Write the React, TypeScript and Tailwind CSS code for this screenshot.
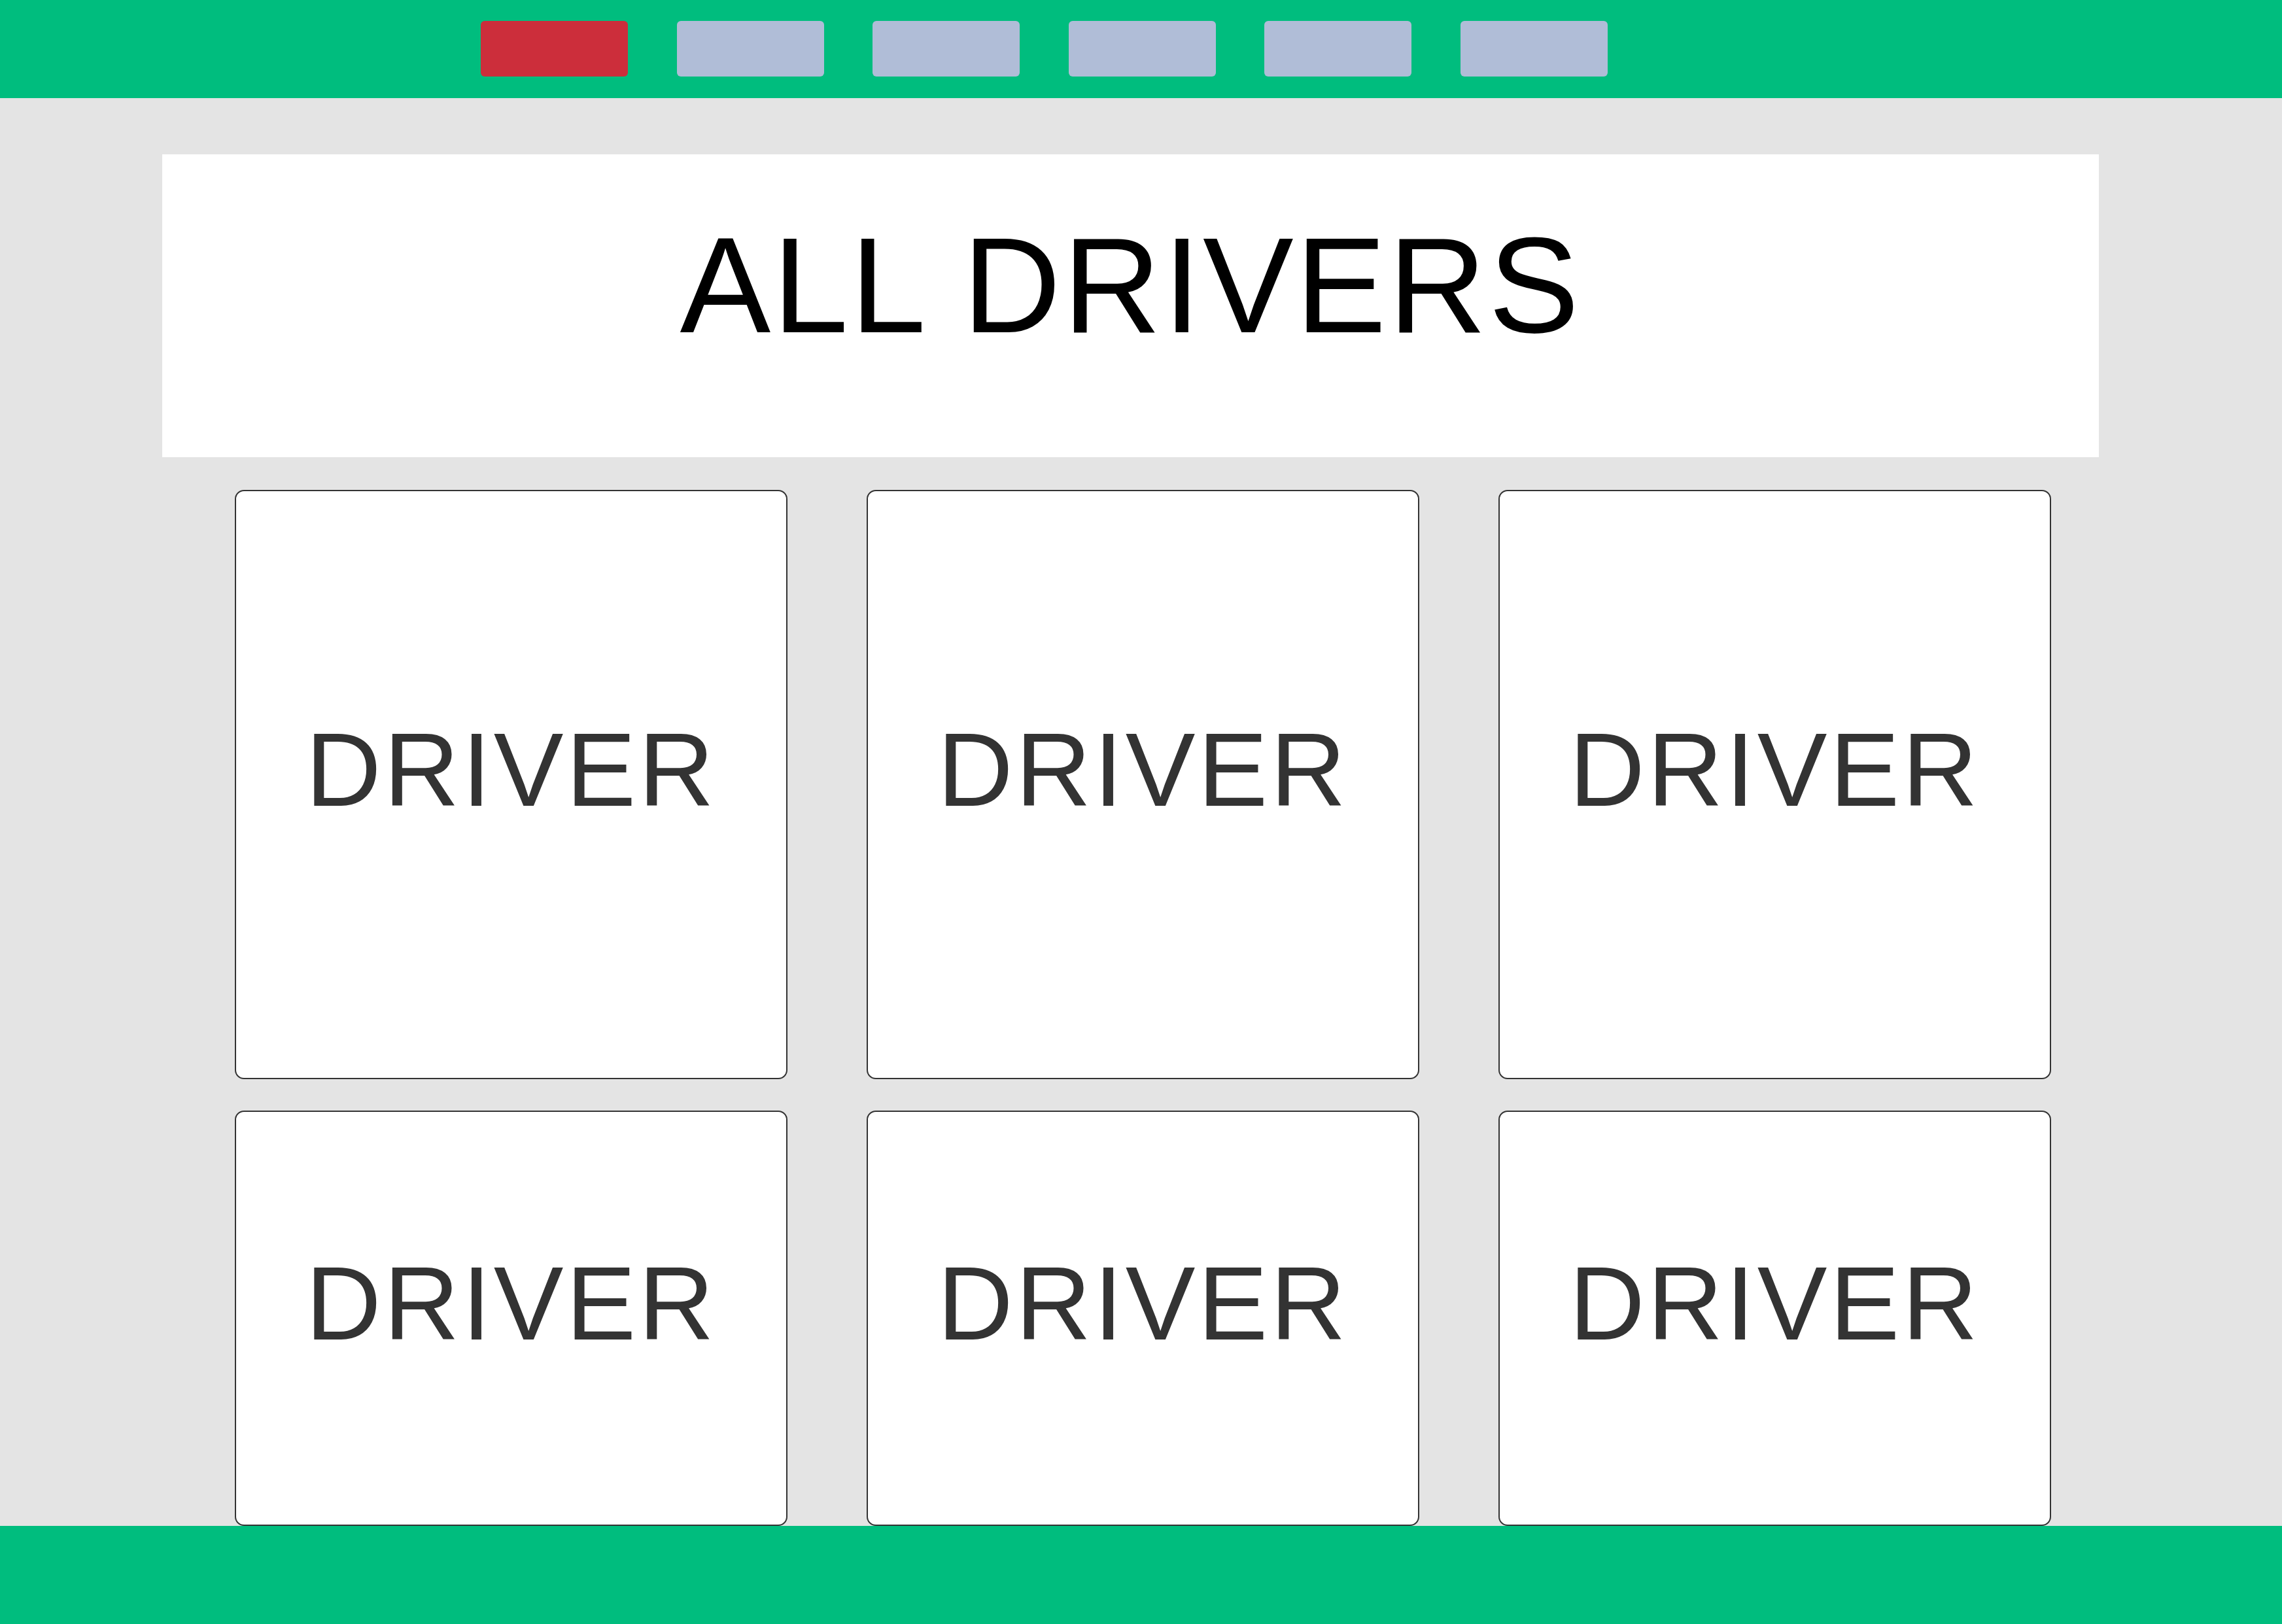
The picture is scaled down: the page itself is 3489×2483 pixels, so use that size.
import React from "react";

const tabs = ["active", "idle", "idle", "idle", "idle", "idle"];

function NavBar() {
  return (
    <div className="h-[150px] w-full bg-[#00bd7e] flex flex-row items-start pl-[735px] pt-[32px] gap-[74.6px]">
      {tabs.map((t, i) => (
        <div
          key={i}
          className={
            t === "active"
              ? "w-[225px] h-[85px] rounded-[6px] bg-[#cc2e3b]"
              : "w-[225px] h-[85px] rounded-[6px] bg-[#b0bdd7]"
          }
        />
      ))}
    </div>
  );
}

function DriverCard() {
  return (
    <div className="bg-white border-2 border-[#333333] rounded-[14px] flex items-center justify-center pb-[46px]">
      <p className="text-[160px] tracking-[4px] text-[#333333] font-['Liberation_Sans',Arial,sans-serif]">
        DRIVER
      </p>
    </div>
  );
}

export default function App() {
  return (
    <div className="w-[3489px] h-[2483px] flex flex-col overflow-hidden font-['Liberation_Sans',Arial,sans-serif]">
      <NavBar />
      <main className="flex-1 bg-[#e4e4e4] overflow-hidden">
        <div className="mt-[86px] ml-[248px] w-[2961px] h-[463px] bg-white flex justify-center pt-[44px]">
          <h1 className="text-[208px] tracking-[3px] text-black">ALL DRIVERS</h1>
        </div>
        <div className="mt-[50px] ml-[359px] grid grid-cols-[repeat(3,845px)] grid-rows-[901px_635px] gap-x-[121px] gap-y-[48px]">
          {Array.from({ length: 6 }).map((_, i) => (
            <DriverCard key={i} />
          ))}
        </div>
      </main>
      <footer className="h-[150px] w-full bg-[#00bd7e]" />
    </div>
  );
}
